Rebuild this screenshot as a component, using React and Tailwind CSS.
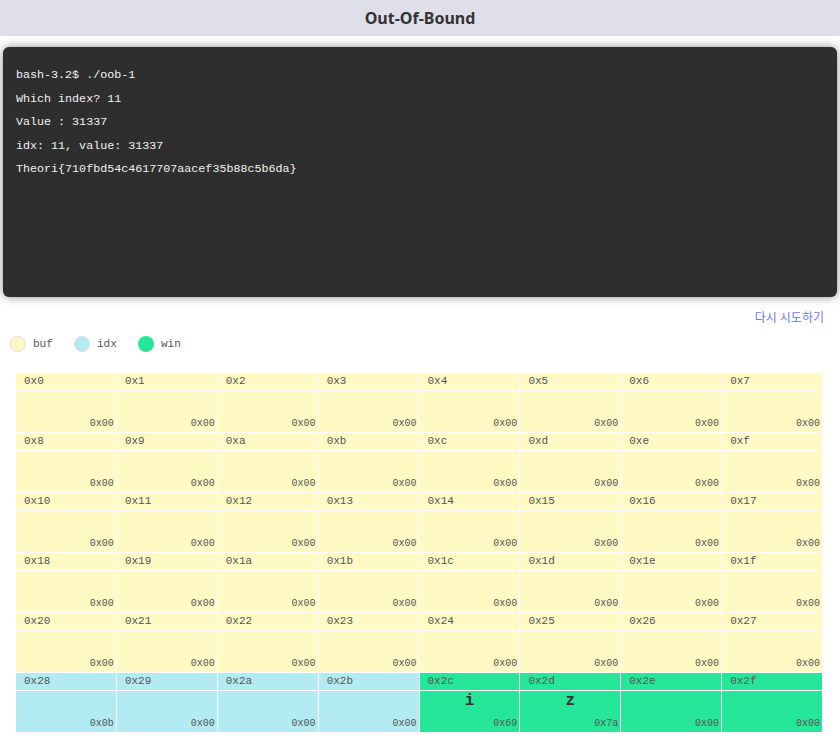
const mono = { fontFamily: '"Liberation Mono", "Courier New", monospace' };

const lines = [
  "bash-3.2$ ./oob-1",
  "Which index? 11",
  "Value : 31337",
  "idx: 11, value: 31337",
  "Theori{710fbd54c4617707aacef35b88c5b6da}",
];

const COLORS = {
  buf: "bg-[#fff9c4]",
  idx: "bg-[#b2ebf2]",
  win: "bg-[#26e699]",
};

// memory layout: 0x00-0x27 buf, 0x28-0x2b idx, 0x2c-0x2f win
const cells = Array.from({ length: 48 }, (_, i) => {
  let kind = "buf";
  if (i >= 0x28 && i < 0x2c) kind = "idx";
  if (i >= 0x2c) kind = "win";
  let byte = 0;
  if (i === 0x28) byte = 11;
  if (i === 0x2c) byte = 0x69;
  if (i === 0x2d) byte = 0x7a;
  return { addr: i, kind, byte };
});

function hex(n, pad) {
  return "0x" + n.toString(16).padStart(pad, "0");
}

function Cell({ cell }) {
  const bg = COLORS[cell.kind];
  const ch = cell.kind === "win" && cell.byte ? String.fromCharCode(cell.byte) : "";
  return (
    <div className="flex flex-col h-[59px] text-[#555]" style={mono}>
      <div className={`${bg} h-[17px] leading-[17px] pl-2 text-[11px]`}>{hex(cell.addr, 1)}</div>
      <div className="h-px bg-white" />
      <div className={`${bg} h-[41px] flex flex-col justify-between`}>
        <div className="h-[20px] leading-[20px] text-center text-[16px] font-bold text-[#333]">{ch}</div>
        <div className="text-right pr-[2px] text-[10px] leading-[13px] pb-[2px]">{hex(cell.byte, 2)}</div>
      </div>
    </div>
  );
}

export default function App() {
  return (
    <div className="min-h-[751px] bg-white" style={{ fontFamily: '"Noto Sans", "Noto Sans CJK KR", sans-serif' }}>
      <div className="h-9 bg-[#dfdfea] flex items-center justify-center">
        <h1 className="text-[16px] font-bold text-[#333]">Out-Of-Bound</h1>
      </div>

      <div className="mx-[3px] mt-[11px] h-[250px] rounded-[6px] bg-[#2e2e2e] shadow-[0_0_10px_rgba(0,0,0,0.45)] pl-[13px] pt-[17px]">
        {lines.map((l) => (
          <div key={l} className="text-[11.7px] leading-[23.5px] text-[#f2f2f2]" style={mono}>
            {l}
          </div>
        ))}
      </div>

      <div className="flex justify-end pr-4 mt-[13px]">
        <button className="text-[12px] leading-[16px] text-[#6b78f0]">다시 시도하기</button>
      </div>

      <div className="flex items-center gap-[12px] pl-[10px] mt-[8px] h-[20px]">
        {["buf", "idx", "win"].map((k) => (
          <div key={k} className="flex items-center gap-[7px]">
            <span className={`size-4 rounded-full ${COLORS[k]} ${k === "win" ? "" : "border border-[#ddd]"}`} />
            <span className="text-[11px] text-[#555] w-[29px]" style={mono}>{k}</span>
          </div>
        ))}
      </div>

      <div className="ml-4 mr-[18px] mt-[19px] grid grid-cols-8 gap-px bg-white">
        {cells.map((c) => (
          <Cell key={c.addr} cell={c} />
        ))}
      </div>
    </div>
  );
}
